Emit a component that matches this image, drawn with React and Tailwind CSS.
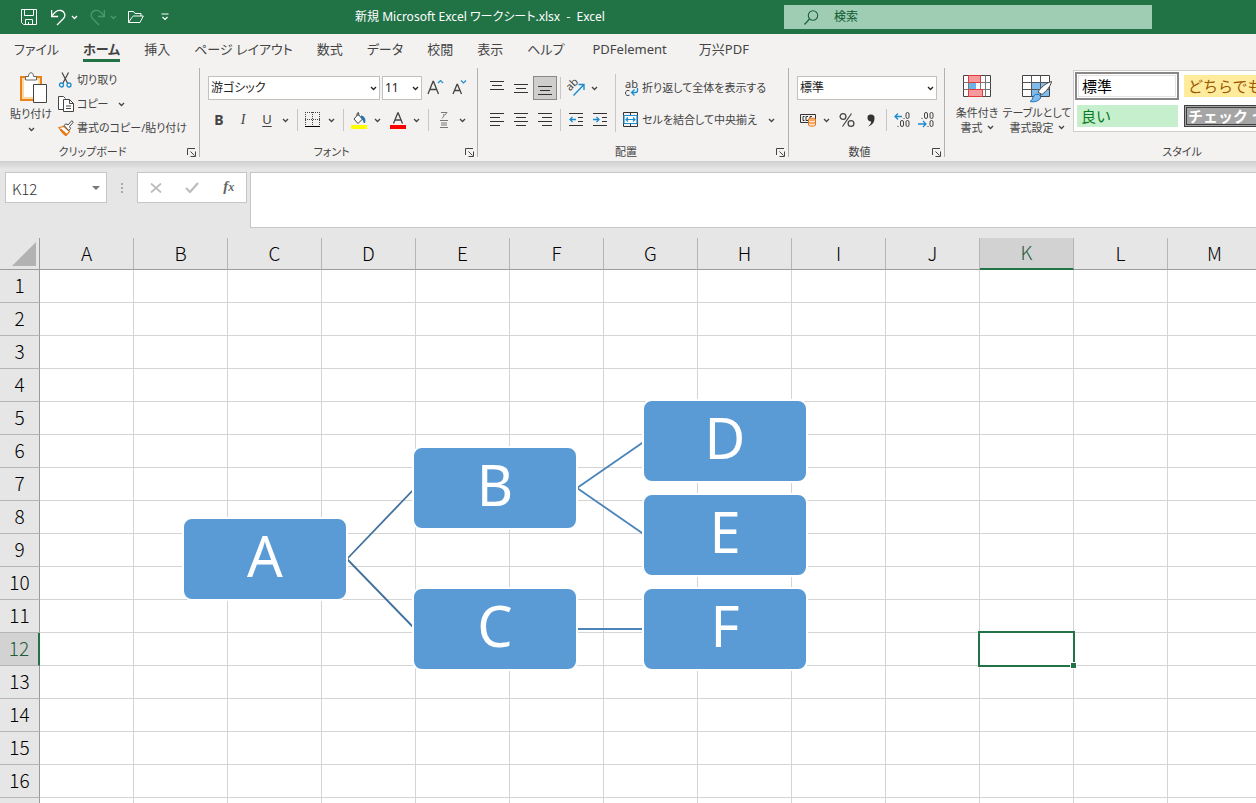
import { clsx } from 'clsx'

const tabs = ['ファイル', 'ホーム', '挿入', 'ページ レイアウト', '数式', 'データ', '校閲', '表示', 'ヘルプ']
const addinTabs = ['PDFelement', '万兴PDF']

const columns = ['A', 'B', 'C', 'D', 'E', 'F', 'G', 'H', 'I', 'J', 'K', 'L', 'M']
const rows = Array.from({ length: 17 }, (_, i) => i + 1)
const activeColumn = 'K'
const activeRow = 12

// node positions on the sheet canvas, in px from its top left corner
const nodes = [
  { id: 'A', x: 182, y: 279 },
  { id: 'B', x: 412, y: 208 },
  { id: 'C', x: 412, y: 349 },
  { id: 'D', x: 642, y: 161 },
  { id: 'E', x: 642, y: 255 },
  { id: 'F', x: 642, y: 349 },
]

const links = [
  { from: 'A', to: 'B', color: '#41719c' },
  { from: 'A', to: 'C', color: '#41719c' },
  { from: 'B', to: 'D', color: '#4a84b8' },
  { from: 'B', to: 'E', color: '#4a84b8' },
  { from: 'C', to: 'F', color: '#4a84b8' },
]

function Icon({ w = 16, h = 16, className, children }) {
  return (
    <svg width={w} height={h} viewBox={`0 0 ${w} ${h}`} fill="none" stroke="#444" className={clsx('shrink-0', className)} aria-hidden="true">
      {children}
    </svg>
  )
}

function Chevron({ color = '#444' }) {
  return (
    <Icon w={7} h={5}>
      <path d="M1 1l2.5 2.5L6 1" stroke={color} strokeWidth="1.3" />
    </Icon>
  )
}

function Tool({ label, pressed, children }) {
  return (
    <button
      type="button"
      aria-label={label}
      className={clsx(
        'flex w-6 h-6 items-center justify-center text-[#444]',
        pressed && 'bg-[#cfcecd] border border-[#8a8886]'
      )}
    >
      {children}
    </button>
  )
}

function DropButton({ label, color }) {
  return (
    <button type="button" aria-label={label} className="flex w-3 h-6 items-center justify-center">
      <Chevron color={color} />
    </button>
  )
}

function Divider({ className = 'ml-1.5' }) {
  return <div className={clsx('mr-[3px] h-[22px] w-px bg-[#c8c6c4]', className)} />
}

function Combo({ label, value, className }) {
  return (
    <div className={clsx('relative h-6 border border-[#c3c1bf] bg-white', className)}>
      <select aria-label={label} className="h-full w-full appearance-none bg-transparent pl-[2px] text-xs text-[#222] outline-none">
        <option>{value}</option>
      </select>
      <div className="pointer-events-none absolute inset-y-0 right-[2px] flex items-center">
        <Chevron color="#222" />
      </div>
    </div>
  )
}

function Group({ name, launcher = true, className, children }) {
  return (
    <section aria-label={name} className={clsx('flex shrink-0 flex-col pt-1', className)}>
      <div className="flex h-[76px]">{children}</div>
      <div className="flex h-[17px] items-center">
        <span className="flex-1 text-center">{name}</span>
        <button type="button" aria-label={`${name}の設定`} className="mr-[2px] flex w-3 justify-center">
          {launcher && (
            <Icon w={9} h={9}>
              <path d="M.5 7V.5H8M3.5 3.5l4 4M8.5 3.5v5h-5" />
            </Icon>
          )}
        </button>
      </div>
    </section>
  )
}

function GroupLine() {
  return <div className="my-1 w-px shrink-0 bg-[#b3b1af]" />
}

function Lines({ d }) {
  return (
    <Icon w={14} h={14}>
      <path d={d} stroke="#333" shapeRendering="crispEdges" />
    </Icon>
  )
}

function TitleBar() {
  return (
    <header className="flex h-[34px] shrink-0 items-center bg-[#217346] text-xs text-white">
      <div className="flex w-44 shrink-0 items-center pl-[21px]">
        <button type="button" aria-label="上書き保存">
          <Icon w={16} h={16}>
            <path d="M.5.5h15v15h-13l-2-2zM3.5.5v6h9v-6M4.5 15.5v-5h7v5M7.5 13v2.5" stroke="#fff" />
          </Icon>
        </button>
        <button type="button" aria-label="元に戻す" className="ml-[14px]">
          <Icon w={15} h={17}>
            <path d="M.6 1v6.5h6.5M1 7C4 2.5 7 .7 10 1.5c3.8 1 5 5 2.5 8L6 16" stroke="#fff" strokeWidth="1.3" />
          </Icon>
        </button>
        <div className="ml-[2px] flex">
          <DropButton label="元に戻す履歴" color="#fff" />
        </div>
        <button type="button" aria-label="やり直し" className="ml-[10px]">
          <Icon w={15} h={17}>
            <path d="M14.4 1v6.5H8M14 7C11 2.5 8 .7 5 1.5c-3.8 1-5 5-2.5 8L9 16" stroke="#4e9670" strokeWidth="1.3" />
          </Icon>
        </button>
        <div className="ml-[2px] flex">
          <DropButton label="やり直し履歴" color="#4e9670" />
        </div>
        <button type="button" aria-label="開く" className="ml-[9px]">
          <Icon w={16} h={12}>
            <path d="M.5 11.5V.5h5l1.5 2h6v2.5M.5 11.5h11.5L15.3 5H5.5L3.8 6.5.5 11.5" stroke="#fff" />
          </Icon>
        </button>
        <button type="button" aria-label="クイック アクセスのカスタマイズ" className="ml-[17px]">
          <Icon w={8} h={8}>
            <path d="M.5 1h7M1.500 4L4 6.5 6.5 4" stroke="#fff" strokeWidth="1.2" />
          </Icon>
        </button>
      </div>
      <h1 className="flex-1 truncate text-center whitespace-pre">新規 Microsoft Excel ワークシート.xlsx  -  Excel</h1>
      <label className="mr-[104px] flex h-6 w-[368px] items-center bg-[#9fcdb3] pl-5">
        <Icon w={15} h={15}>
          <circle cx="9" cy="5.5" r="4.7" stroke="#1d5f3b" strokeWidth="1.1" />
          <path d="M5.5 9L.5 14.5" stroke="#1d5f3b" strokeWidth="1.2" />
        </Icon>
        <input type="text" placeholder="検索" aria-label="検索" className="ml-[15px] min-w-0 flex-1 bg-transparent text-xs outline-none placeholder:text-[#0e5a30]" />
      </label>
    </header>
  )
}

function TabStrip() {
  return (
    <nav className="flex h-[30px] shrink-0 items-center gap-6 pl-[14px] text-[13px] leading-5 text-[#444]">
      {tabs.map(tab => (
        <button
          key={tab}
          type="button"
          className={clsx('h-[26px] shrink-0 border-b-3 pt-0.5 whitespace-nowrap', tab === 'ホーム' ? 'border-[#217346] font-bold' : 'border-transparent')}
        >
          {tab}
        </button>
      ))}
      {addinTabs.map(tab => (
        <button key={tab} type="button" className="h-[26px] shrink-0 border-b-3 border-transparent px-1 pt-0.5 whitespace-nowrap">
          {tab}
        </button>
      ))}
    </nav>
  )
}

function ClipboardGroup() {
  return (
    <Group name="クリップボード" className="w-[199px]">
      <button type="button" className="flex w-[58px] flex-col items-center pt-1 pl-1">
        <Icon w={27} h={31} className="ml-1">
          <path d="M1 5h20v23H1z" fill="#fff" stroke="#e8821a" strokeWidth="2" />
          <path d="M3 7h16v19H3z" stroke="#fbd9a0" strokeWidth="2" />
          <path d="M5.5 8V4.5h3C8.5 2 9.5.8 11 .8s2.5 1.2 2.5 3.7h3V8z" fill="#fff" stroke="#666" />
          <path d="M13.5 12.5h13v18h-13z" fill="#fff" stroke="#444" />
        </Icon>
        <span className="mt-0.5 leading-[18px] whitespace-nowrap">貼り付け</span>
        <span className="mt-1"><Chevron /></span>
      </button>
      <div className="flex flex-col">
        <button type="button" className="flex h-6 items-center gap-1">
          <Icon w={15} h={16}>
            <path d="M4 .5l5.5 10.5M10.5.5L5 11" strokeWidth="1.2" />
            <circle cx="3.5" cy="13" r="2" stroke="#1e8bcd" strokeWidth="1.3" />
            <circle cx="11" cy="13" r="2" stroke="#1e8bcd" strokeWidth="1.3" />
          </Icon>
          切り取り
        </button>
        <button type="button" className="flex h-6 items-center gap-[3px]">
          <Icon w={16} h={16}>
            <path d="M5 13.5H.5V.5h5l2 2" fill="#fff" />
            <path d="M5.500 3.500h6l4 4v8h-10z" fill="#fff" />
            <path d="M11.5 3.500v4h4M8 10h5M8 12.500h5" />
          </Icon>
          コピー
          <span className="ml-1.5"><Chevron /></span>
        </button>
        <button type="button" className="flex h-6 items-center gap-[3px] whitespace-nowrap">
          <Icon w={16} h={16}>
            <path d="M1 7.500l5-1 5.500 5L8 15.500C5 14 3 11 1 7.500z" fill="#fff" stroke="#e8730c" strokeWidth="1.2" />
            <path d="M3 9l6 5.500-1.500.5-5-5z" fill="#e8730c" stroke="#e8730c" />
            <path d="M6 5.500l2-1.700 2 1.200L13.800.7l1.500 1.500L11.500 6.500l1 2-1.700 2z" fill="#fff" />
          </Icon>
          書式のコピー/貼り付け
        </button>
      </div>
    </Group>
  )
}

function FontGroup() {
  return (
    <Group name="フォント" className="w-[277px]">
      <div className="flex flex-col pt-1 pl-[7px]">
        <div className="flex h-8 items-center">
          <Combo label="フォント" value="游ゴシック" className="ml-px w-[172px]" />
          <Combo label="フォント サイズ" value="11" className="ml-[2px] w-10" />
          <div className="ml-px flex">
            <Tool label="フォント サイズの拡大">
              <Icon w={16} h={16} className="overflow-visible">
                <path d="M1 14L6 1.500h.5L11.500 14M2.800 9.500h7" strokeWidth="1.3" />
                <path d="M11 3l2.500-2.500L16 3" stroke="#1e8bcd" strokeWidth="1.2" />
              </Icon>
            </Tool>
            <Tool label="フォント サイズの縮小">
              <Icon w={16} h={16} className="overflow-visible">
                <path d="M2 14L6 4.500h.5L10.500 14M3.500 10.500h5.500" strokeWidth="1.3" />
                <path d="M10 .5L12.500 3 15 .5" stroke="#1e8bcd" strokeWidth="1.2" />
              </Icon>
            </Tool>
          </div>
        </div>
        <div className="flex h-8 items-center">
          <Tool label="太字"><span className="text-sm font-bold">B</span></Tool>
          <Tool label="斜体"><span className="font-['Liberation_Serif',serif] text-sm italic">I</span></Tool>
          <Tool label="下線"><span className="text-[13px] underline underline-offset-2">U</span></Tool>
          <DropButton label="下線の種類" />
          <Divider />
          <Tool label="罫線">
            <Icon w={16} h={16}>
              <path d="M0 .5h15M0 7.500h15M.5 0v14M7.500 0v14M14.500 0v14" strokeDasharray="1 1" shapeRendering="crispEdges" />
              <path d="M0 14.500h15" stroke="#000" shapeRendering="crispEdges" />
            </Icon>
          </Tool>
          <DropButton label="罫線の種類" />
          <Divider />
          <Tool label="塗りつぶしの色">
            <Icon w={16} h={17}>
              <path d="M7 2.500l4.500 4.500-4.500 4.500-4-4.500zM6 4V1.500l1.500-1 .5 3" fill="#fff" />
              <path d="M10 4c3.500.5 4.500 3 3.500 7-1-1-1-4-3.500-5.500z" fill="#1e6fa8" stroke="#1e6fa8" />
              <path d="M0 13h16v4H0z" fill="#ffff00" stroke="none" />
            </Icon>
          </Tool>
          <DropButton label="塗りつぶしの色の選択" />
          <div className="ml-[3px] flex">
            <Tool label="フォントの色">
              <Icon w={16} h={17}>
                <path d="M3.500 11.500L7.800 1h.4L12.500 11.500M5 8h6" strokeWidth="1.3" />
                <path d="M0 13h16v4H0z" fill="#ff0000" stroke="none" />
              </Icon>
            </Tool>
          </div>
          <DropButton label="フォントの色の選択" />
          <Divider />
          <Tool label="ふりがな">
            <Icon w={10} h={16}>
              <path d="M2 .5h6L5.500 3.500M4.800 2c0 2.500-.5 3.500-2 4.500M1 8.500h8M2 11h6M2 13h6M1 15.500h8" stroke="#777" />
            </Icon>
          </Tool>
          <DropButton label="ふりがなの設定" />
        </div>
      </div>
    </Group>
  )
}

function AlignmentGroup() {
  return (
    <Group name="配置" className="w-[310px]">
      <div className="flex flex-col pt-1 pl-[7px]">
        <div className="flex h-8 items-center">
          <Tool label="上揃え"><Lines d="M0 .5h14M2 4.500h10M0 8.500h14" /></Tool>
          <Tool label="上下中央揃え"><Lines d="M0 3.500h14M2 7.500h10M0 11.500h14" /></Tool>
          <Tool label="下揃え" pressed><Lines d="M0 5.500h14M2 9.500h10M0 13.500h14" /></Tool>
          <Divider className="ml-[3px]" />
          <Tool label="方向">
            <Icon w={18} h={18} className="overflow-visible">
              <text x="3" y="12.500" fontSize="11" fill="#444" stroke="none" transform="rotate(-45 3 12.500)">ab</text>
              <path d="M6.500 16.500L16.500 6M11.500 5.500h5.500v5.500" stroke="#1e8bcd" strokeWidth="1.4" />
            </Icon>
          </Tool>
          <DropButton label="方向の選択" />
        </div>
        <div className="flex h-8 items-center">
          <Tool label="左揃え"><Lines d="M0 .5h14M0 4.500h10M0 8.500h14M0 12.500h10" /></Tool>
          <Tool label="中央揃え"><Lines d="M0 .5h14M2 4.500h10M0 8.500h14M2 12.500h10" /></Tool>
          <Tool label="右揃え"><Lines d="M0 .5h14M4 4.500h10M0 8.500h14M4 12.500h10" /></Tool>
          <Divider className="ml-[3px]" />
          <Tool label="インデントを減らす">
            <Icon w={14} h={14}>
              <path d="M0 .5h14M9 4.500h5M9 8.500h5M0 12.500h14" stroke="#333" shapeRendering="crispEdges" />
              <path d="M7 6.500H1M3.500 4L1 6.500 3.500 9" stroke="#1e8bcd" strokeWidth="1.3" />
            </Icon>
          </Tool>
          <Tool label="インデントを増やす">
            <Icon w={14} h={14}>
              <path d="M0 .5h14M9 4.500h5M9 8.500h5M0 12.500h14" stroke="#333" shapeRendering="crispEdges" />
              <path d="M0 6.500h6M3.500 4L6 6.500 3.500 9" stroke="#1e8bcd" strokeWidth="1.3" />
            </Icon>
          </Tool>
        </div>
      </div>
      <div className="mt-1.5 ml-[3px] h-[58px] w-px bg-[#c8c6c4]" />
      <div className="flex flex-col pt-1 pl-[7px]">
        <button type="button" className="flex h-8 items-center gap-[3px] whitespace-nowrap">
          <Icon w={16} h={17} className="overflow-visible">
            <text x="2" y="8" fontSize="11" fill="#444" stroke="none">ab</text>
            <path d="M6.500 10.800c-2-1-4 0-4 2.200s2 3.200 4 2.200" />
            <path d="M14.500 8v2.500c0 1.500-.5 2-2 2H9M11.500 9.500l-3 3 3 3" stroke="#1e8bcd" strokeWidth="1.3" />
          </Icon>
          折り返して全体を表示する
        </button>
        <button type="button" className="flex h-8 items-center gap-[3px] whitespace-nowrap">
          <Icon w={16} h={16}>
            <path d="M.5.5h14v14H.5zM7.500.5v3M7.500 11.500v3" stroke="#333" />
            <path d="M1 3.500h13v8H1z" fill="#fff" stroke="#1e8bcd" strokeWidth="1.2" />
            <path d="M3 7.500h9M5 5.500l-2 2 2 2M10 5.500l2 2-2 2" stroke="#1e8bcd" strokeWidth="1.2" />
          </Icon>
          セルを結合して中央揃え
          <span className="ml-2"><Chevron /></span>
        </button>
      </div>
    </Group>
  )
}

function NumberGroup() {
  return (
    <Group name="数値" className="w-[155px]">
      <div className="flex flex-col pt-1 pl-[7px]">
        <div className="flex h-8 items-center">
          <Combo label="表示形式" value="標準" className="ml-px w-[140px]" />
        </div>
        <div className="flex h-8 items-center">
          <Tool label="通貨表示形式">
            <Icon w={17} h={14}>
              <path d="M.5 1.500h15v8H.5z" stroke="#333" />
              <path d="M4.500 3.500H3v4h1.500M8 7.500h-2v-4h2M10 7.500v-4h2" stroke="#333" />
              <path d="M8.500 6c0-1 7-1 7 0v6c0 1.500-7 1.500-7 0z" fill="#fbe3cf" stroke="#e8730c" />
              <path d="M8.500 6c0 1.500 7 1.500 7 0M8.500 9c0 1.500 7 1.500 7 0" stroke="#e8730c" />
            </Icon>
          </Tool>
          <DropButton label="通貨の選択" />
          <div className="ml-[3px] flex">
            <Tool label="パーセント スタイル">
              <Icon w={16} h={16}>
                <circle cx="4" cy="4.500" r="2.900" strokeWidth="1.3" />
                <circle cx="12" cy="11.500" r="2.900" strokeWidth="1.3" />
                <path d="M12.500 1.500l-9 13" strokeWidth="1.2" />
              </Icon>
            </Tool>
            <Tool label="桁区切りスタイル">
              <Icon w={8} h={13}>
                <path d="M4 .5a3.300 3.300 0 0 1 3.500 3.800C7.500 8.500 5 11.500 1 12.500c2-1.500 3-3 3.200-5C2 7.500.5 6 .5 4A3.400 3.400 0 0 1 4 .5z" fill="#333" stroke="none" />
              </Icon>
            </Tool>
          </div>
          <Divider className="ml-[3px]" />
          <Tool label="小数点以下の表示桁数を増やす">
            <Icon w={16} h={16}>
              <path d="M8 4.500H1M4 1.500l-3 3 3 3" stroke="#1e8bcd" strokeWidth="1.3" />
              <path d="M9.500 6.500h1M3.500 14.500h1" />
              <rect x="12" y=".5" width="3" height="6" rx="1.5" />
              <rect x="6.500" y="8.500" width="3" height="6" rx="1.5" />
              <rect x="12" y="8.500" width="3" height="6" rx="1.5" />
            </Icon>
          </Tool>
          <Tool label="小数点以下の表示桁数を減らす">
            <Icon w={16} h={16}>
              <path d="M0 12h8M5 9l3 3-3 3" stroke="#1e8bcd" strokeWidth="1.3" />
              <path d="M3.500 6.500h1M9.500 14.500h1" />
              <rect x="6.500" y=".5" width="3" height="6" rx="1.5" />
              <rect x="12" y=".5" width="3" height="6" rx="1.5" />
              <rect x="12" y="8.500" width="3" height="6" rx="1.5" />
            </Icon>
          </Tool>
        </div>
      </div>
    </Group>
  )
}

function StylesGroup() {
  return (
    <Group name="スタイル" launcher={false} className="w-[488px]">
      <button type="button" className="ml-[7px] flex w-[50px] flex-col items-center pt-[7px] whitespace-nowrap">
        <Icon w={29} h={24}>
          <path d="M.5.5h27v21H.5z" fill="#fff" />
          <path d="M5.500.5v21M17.500.5v21M22.500.5v21M.5 7.500h27M.5 14.500h27" stroke="#777" />
          <path d="M5.500.5h12v7h-12zM5.500 14.500h14v7h-14z" fill="#f79a9e" stroke="#e03a3a" />
          <path d="M6 8h7v6H6z" fill="#6cb4e8" stroke="none" />
        </Icon>
        <span className="mt-1.5 leading-[15px]">条件付き</span>
        <span className="flex items-center gap-1 leading-[15px]">書式 <Chevron /></span>
      </button>
      <button type="button" className="flex w-[70px] flex-col items-center pt-[7px] whitespace-nowrap">
        <Icon w={32} h={28} className="-mb-1">
          <path d="M1.500.5h27v21h-27z" fill="#fff" />
          <path d="M10 7h18v14H10z" fill="#7fbcec" stroke="none" />
          <path d="M10.500.5v21M19.500.5v21M1.500 7.500h27M1.500 14.500h27" stroke="#555" />
          <path d="M17 17c3-4.500 7-8.500 13.500-10.500-1 5-5 9.500-9.500 13z" fill="#fff" />
          <path d="M9 26.500c3-1 2-4 4.500-6.500 3-2 7 0 6 3-1.500 3-6 4.500-10.500 3.500z" fill="#7fbcec" stroke="#1e6fb8" />
        </Icon>
        <span className="mt-1.5 leading-[15px]">テーブルとして</span>
        <span className="flex items-center gap-1 leading-[15px]">書式設定 <Chevron /></span>
      </button>
      <div className="mt-[2px] ml-px grid h-[62px] flex-1 grid-cols-[105px_105px_105px] grid-rows-[30px_30px] overflow-hidden border border-[#d0cecc] bg-white text-[15px] leading-5 [font-feature-settings:normal]">
        <button type="button" className="m-px mr-0 flex items-center border-2 border-[#8a8886] pl-[5px] text-black outline-1 -outline-offset-4 outline-[#e5e3e1]">標準</button>
        <button type="button" className="my-1 ml-[5px] flex items-center bg-[#ffeb9c] pl-1 whitespace-nowrap text-[#9c5700]">どちらでもない</button>
        <button type="button" className="my-1 ml-1 flex items-center bg-[#ffc7ce] pl-1 text-[#9c0006]">悪い</button>
        <button type="button" className="my-1 mr-px ml-[3px] flex items-center bg-[#c6efce] pl-1 text-[#0a7a1e]">良い</button>
        <button type="button" className="my-1 ml-[5px] flex items-center border-3 border-double border-[#3f3f3f] bg-[#a5a5a5] pl-px font-bold whitespace-nowrap text-white">チェック セル</button>
        <button type="button" className="my-1 ml-1 flex items-center bg-[#f2f2f2] pl-1 text-[#fa7d00]">計算</button>
      </div>
    </Group>
  )
}

function FormulaBar() {
  return (
    <div className="flex h-[77px] shrink-0 items-start bg-[#e6e6e6] bg-linear-to-b from-[#cfcfcf] to-[#e6e6e6] to-[8px] pt-[11px] pl-[5px]">
      <div className="flex h-[31px] w-[102px] items-center border border-[#c6c6c6] bg-white">
        <input aria-label="名前ボックス" defaultValue="K12" className="w-20 bg-transparent pt-0.5 pl-1.5 font-['Noto_Sans_CJK_JP',sans-serif] text-[15px] leading-5 font-light text-[#333] outline-none" />
        <button type="button" aria-label="名前の一覧" className="flex w-5 justify-center">
          <Icon w={8} h={4}><path d="M0 0h8L4 4z" fill="#777" stroke="none" /></Icon>
        </button>
      </div>
      <div className="flex h-[31px] w-[30px] items-center justify-center">
        <Icon w={2} h={10}><path d="M0 0h2v2H0zM0 4h2v2H0zM0 8h2v2H0z" fill="#aaa" stroke="none" /></Icon>
      </div>
      <div className="flex h-[31px] w-[110px] items-center justify-around border border-[#c6c6c6] bg-white">
        <button type="button" aria-label="キャンセル">
          <Icon w={12} h={10}><path d="M1 .5l10 9M11 .5l-10 9" stroke="#bdbdbd" strokeWidth="1.8" /></Icon>
        </button>
        <button type="button" aria-label="入力">
          <Icon w={14} h={11}><path d="M1 6l4 4 8-9" stroke="#bdbdbd" strokeWidth="2.2" /></Icon>
        </button>
        <button type="button" aria-label="関数の挿入" className="pb-1 font-['Liberation_Serif',serif] text-[15px] leading-5 font-bold text-[#666] italic">
          f<span className="text-xs">x</span>
        </button>
      </div>
      <input aria-label="数式バー" className="ml-[3px] h-14 min-w-0 flex-1 border border-r-0 border-[#c6c6c6] bg-white px-2 outline-none" />
    </div>
  )
}

function Diagram() {
  const find = id => nodes.find(n => n.id === id)

  return (
    <div className="pointer-events-none absolute inset-0">
      <svg className="absolute inset-0 h-full w-full" fill="none">
        {links.map(({ from, to, color }) => {
          const a = find(from)
          const b = find(to)
          return <line key={from + to} x1={a.x + 165} y1={a.y + 42} x2={b.x + 3} y2={b.y + 42} stroke={color} strokeWidth="1.8" />
        })}
      </svg>
      {nodes.map(node => (
        <div
          key={node.id}
          style={{ left: node.x, top: node.y }}
          className="absolute flex h-[84px] w-[166px] items-center justify-center rounded-[10px] border-2 border-white bg-[#5b9bd5] pb-2 font-['Noto_Sans',sans-serif] text-[56px] leading-none text-white"
        >
          {node.id}
        </div>
      ))}
    </div>
  )
}

function Sheet() {
  return (
    <main className="relative min-h-0 flex-1 overflow-hidden bg-white">
      <table className="w-max table-fixed border-separate border-spacing-0 font-['Noto_Sans_CJK_JP',sans-serif] text-[19px] leading-6 text-black">
        <colgroup>
          <col className="w-10" />
          {columns.map(col => <col key={col} className="w-[94px]" />)}
        </colgroup>
        <thead>
          <tr className="h-8">
            <th className="border-r border-b border-[#9b9b9b] bg-[#e6e6e6] p-0">
              <Icon w={24} h={24} className="ml-3"><path d="M24 0v24H0z" fill="#b2b2b2" stroke="none" /></Icon>
            </th>
            {columns.map(col => (
              <th
                key={col}
                scope="col"
                className={clsx(
                  'border-r p-0 pb-0.5 font-light',
                  col === activeColumn ? 'border-b-2 border-r-[#b5b5b5] border-b-[#217346] bg-[#d2d2d2] text-[#1f5c3a]' : 'border-b border-r-[#b5b5b5] border-b-[#9b9b9b] bg-[#e6e6e6]'
                )}
              >
                {col}
              </th>
            ))}
          </tr>
        </thead>
        <tbody>
          {rows.map(row => (
            <tr key={row} className="h-[33px]">
              <th
                scope="row"
                className={clsx(
                  'border-b border-b-[#b5b5b5] p-0 pb-0.5 font-light',
                  row === activeRow ? 'border-r-2 border-r-[#217346] bg-[#d2d2d2] text-[#1f5c3a]' : 'border-r border-r-[#9b9b9b] bg-[#e6e6e6]'
                )}
              >
                {row}
              </th>
              {columns.map(col => (
                <td key={col} className="relative border-r border-b border-[#d4d4d4] p-0">
                  {col === activeColumn && row === activeRow && (
                    <div className="absolute -inset-0.5 z-10 border-2 border-[#217346]">
                      <span className="absolute -right-1 -bottom-1 size-[7px] border border-white bg-[#217346]" />
                    </div>
                  )}
                </td>
              ))}
            </tr>
          ))}
        </tbody>
      </table>
      <Diagram />
    </main>
  )
}

export default function App() {
  return (
    <div className="flex h-screen flex-col overflow-hidden bg-[#f3f2f1] font-['Noto_Sans','Noto_Sans_CJK_JP',sans-serif] text-xs text-[#444] [font-feature-settings:'palt']">
      <TitleBar />
      <TabStrip />
      <div className="flex h-[97px] shrink-0 overflow-hidden text-[11px]">
        <ClipboardGroup />
        <GroupLine />
        <FontGroup />
        <GroupLine />
        <AlignmentGroup />
        <GroupLine />
        <NumberGroup />
        <GroupLine />
        <StylesGroup />
      </div>
      <FormulaBar />
      <Sheet />
    </div>
  )
}
